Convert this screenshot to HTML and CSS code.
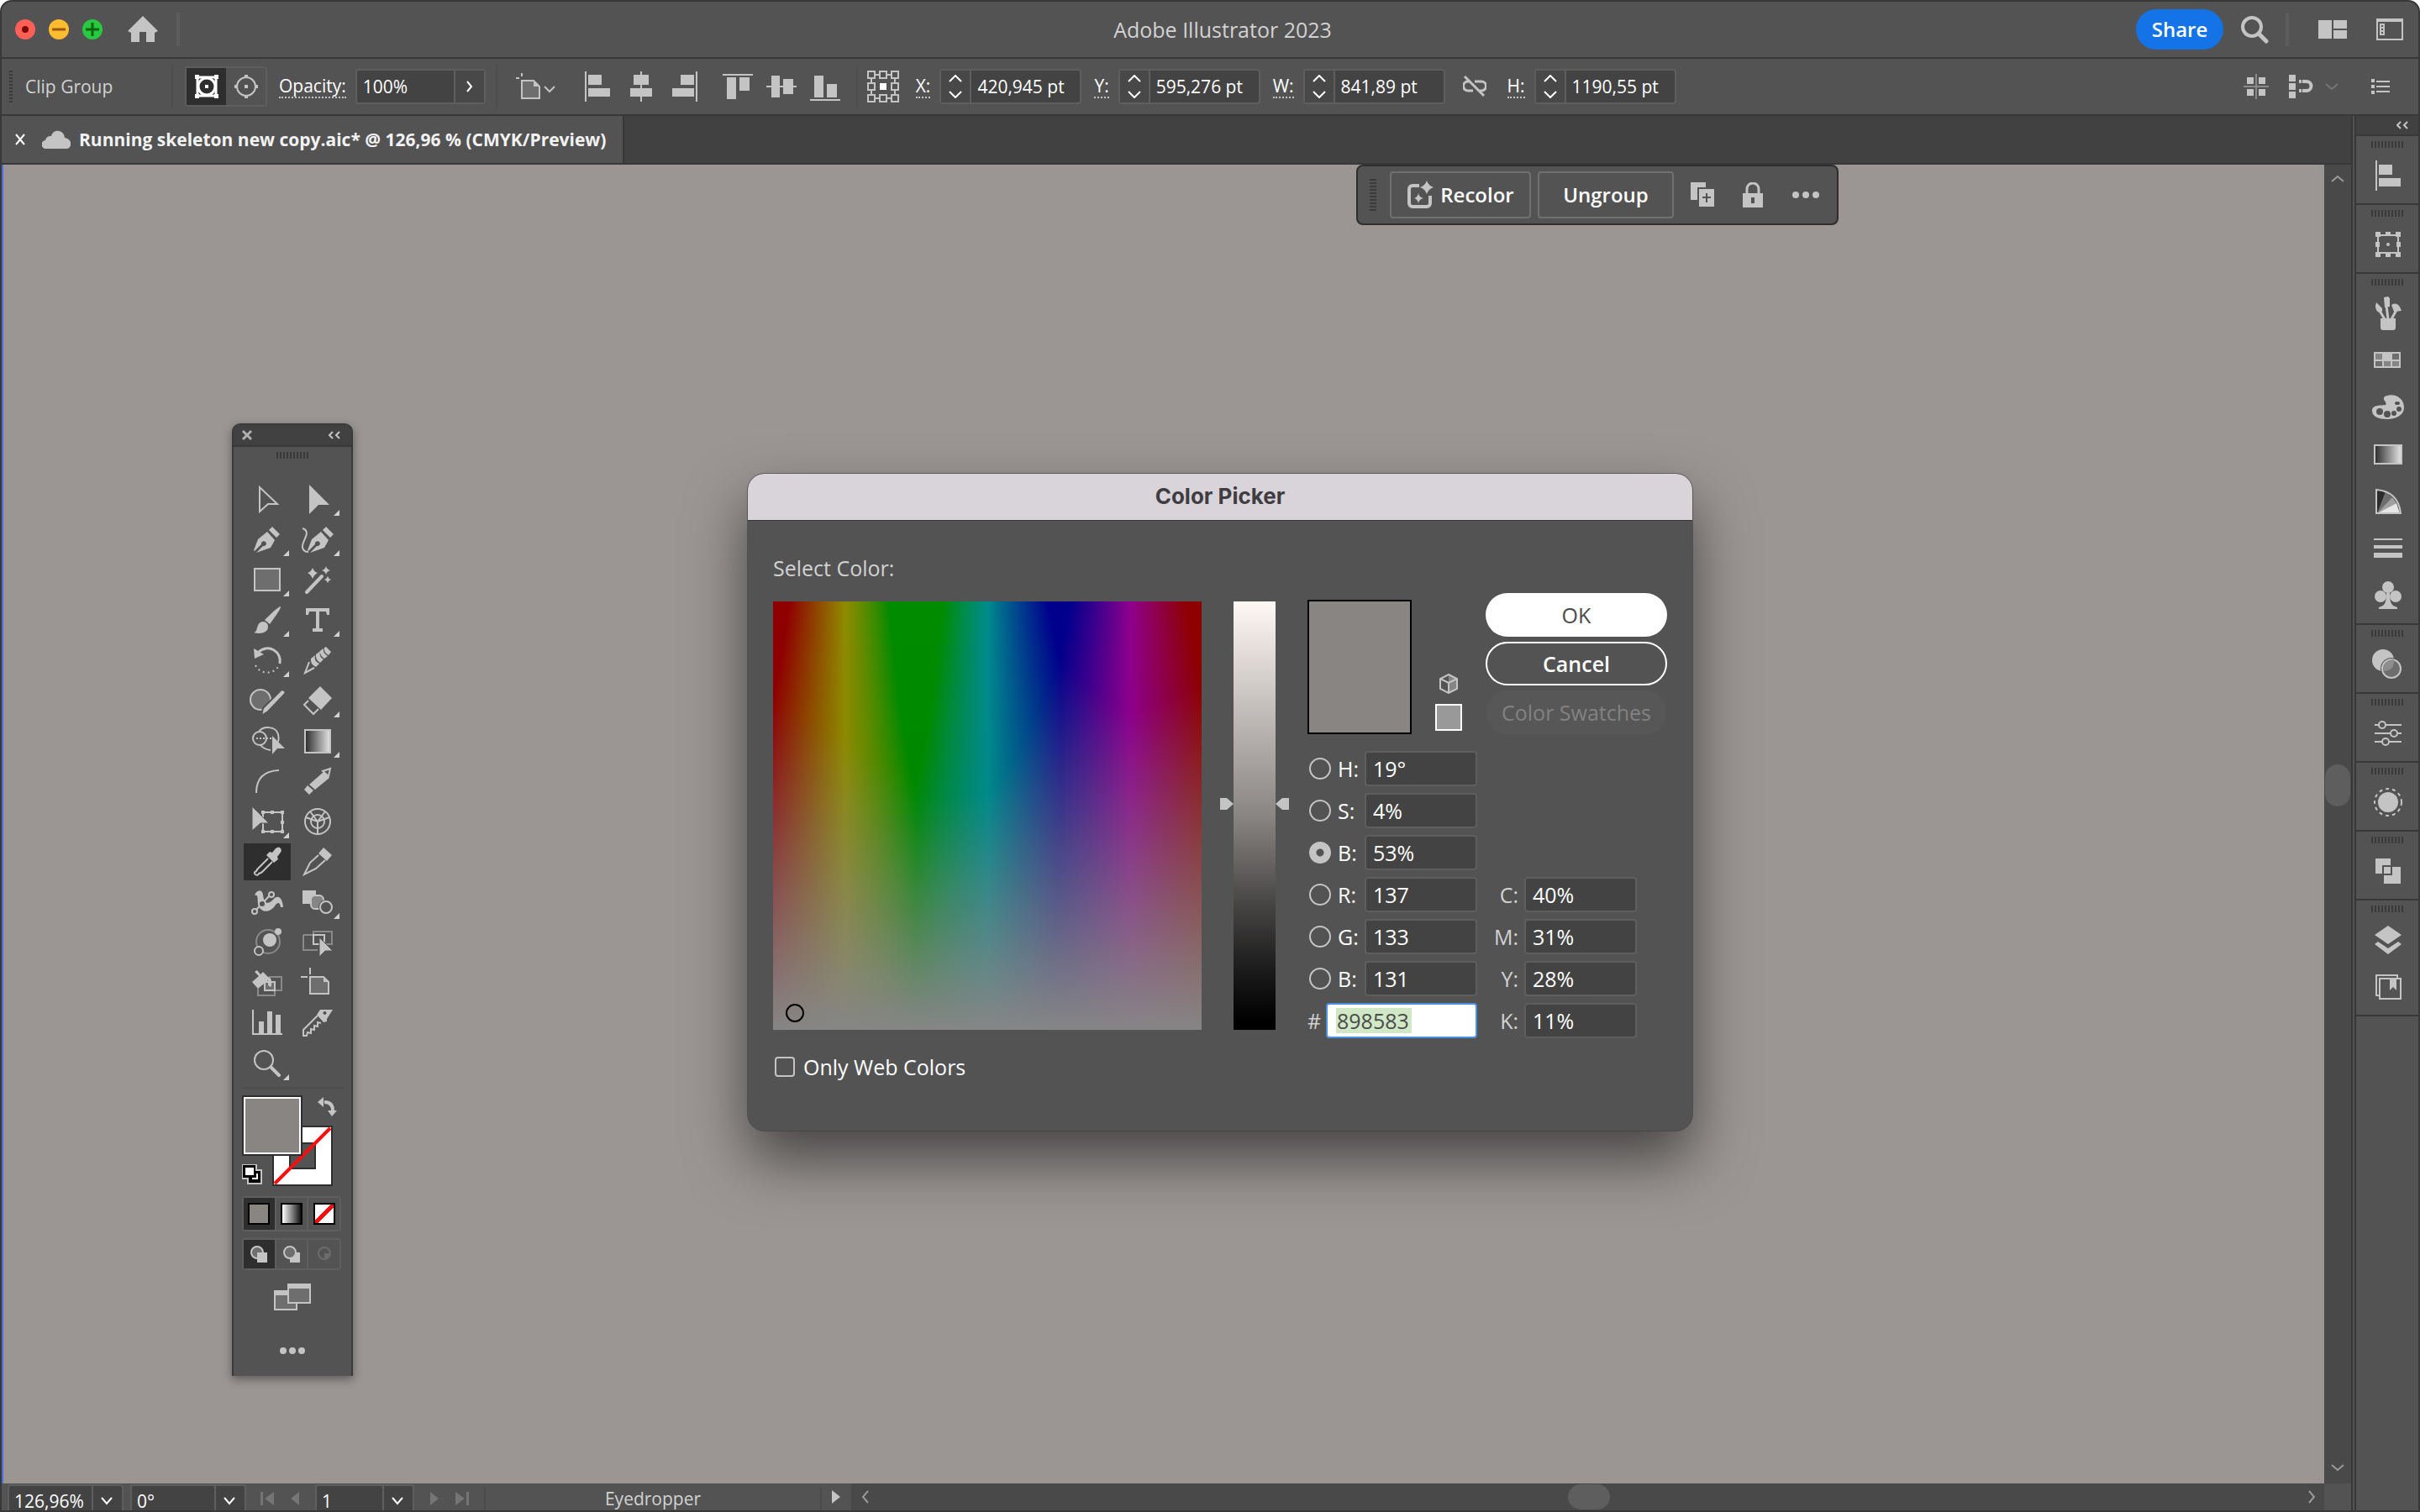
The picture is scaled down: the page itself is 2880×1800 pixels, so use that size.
FILE: index.html
```html
<!DOCTYPE html>
<html lang="en">
<head>
  <meta charset="UTF-8">
  <title>Adobe Illustrator 2023</title>
  <link rel="stylesheet" href="styles.css">
</head>
<body>
<div class="app">

  <!-- Title bar -->
  <header class="titlebar">
    <div class="title-left">
      <svg class="lights" width="104" height="24" viewBox="0 0 104 24">
        <circle cx="12" cy="12" r="12" fill="#ff5f57"/><circle cx="12" cy="12" r="4" fill="#7a0a05"/>
        <circle cx="52" cy="12" r="12" fill="#febc2e"/><path d="M44 12h16" stroke="#985712" stroke-width="3"/>
        <circle cx="92" cy="12" r="12" fill="#28c840"/><path d="M84 12h16M92 4v16" stroke="#0b650d" stroke-width="3"/>
      </svg>
      <svg class="ic" width="36" height="32" viewBox="0 0 36 32"><path d="M18 0L36 18l-4 2v11H22V19h-8v12H4V20l-4-2z"/></svg>
      <span class="bar-sep"></span>
    </div>
    <div class="app-name">Adobe Illustrator 2023</div>
    <div class="title-right">
      <button class="share">Share</button>
      <svg class="ic" width="34" height="34" viewBox="0 0 34 34"><g class="ln"><circle cx="14" cy="14" r="11" stroke-width="4"/><path d="M22 22l9 9" stroke-width="5" stroke-linecap="round"/></g></svg>
      <span class="bar-sep"></span>
      <svg class="ic workspace" width="34" height="22" viewBox="0 0 34 22"><path d="M0 0h16v22H0zM18 0h16v10H18zM18 12h16v10H18z"/></svg>
      <svg class="ic" width="32" height="26" viewBox="0 0 32 26"><path d="M0 0h32v26H0zM2 4v20h28V4z" fill-rule="evenodd"/><path d="M4 6h6v14H4zM6 8v2h2V8zM6 12v2h2v-2zM6 16v2h2v-2z" fill-rule="evenodd"/></svg>
    </div>
  </header>

  <!-- Control bar -->
  <div class="controlbar">
    <span class="grip-v"></span>
    <span class="selection-name">Clip Group</span>
    <span class="sep"></span>
    <div class="toggle">
      <button class="on" aria-label="Edit clipping path"><svg class="ic" width="30" height="30" viewBox="0 0 30 30"><g fill="none" stroke="#fff" stroke-width="3"><rect x="4" y="4" width="22" height="22"/><circle cx="15" cy="15" r="10"/></g><path fill="#fff" d="M1 1h5v5H1zM24 1h5v5h-5zM1 24h5v5H1zM24 24h5v5h-5zM13 13h4v4h-4z"/></svg></button>
      <button aria-label="Edit contents"><svg class="ic" width="28" height="28" viewBox="0 0 28 28"><circle class="ln" cx="14" cy="14" r="11"/><path d="M12 0h4v4h-4zM12 24h4v4h-4zM0 12h4v4H0zM24 12h4v4h-4zM12 12h4v4h-4z"/></svg></button>
    </div>
    <label class="dotted" for="opacity">Opacity:</label>
    <div class="field opacity">
      <input id="opacity" type="text" value="100%">
      <button class="next" aria-label="Opacity slider"><svg width="10" height="14" viewBox="0 0 10 14"><path class="wl" d="M2 1l5 6-5 6"/></svg></button>
    </div>
    <span class="sep"></span>
    <svg class="ic artboard" width="48" height="32" viewBox="0 0 48 32"><path d="M7 9h14l7 7v14H7z" fill="#6e6e6e"/><path class="ln" d="M7 9h14l7 7v14H7zM0 6h4M7 0v4M34 16l6 6 6-6"/><path d="M21 9v7h7z"/></svg>
    <div class="aligns">
      <svg class="ic" width="36" height="36" viewBox="0 0 36 36"><path d="M3 0h2v36H3zM7 4h16v12H7zM7 20h26v10H7z"/></svg>
      <svg class="ic" width="36" height="36" viewBox="0 0 36 36"><path d="M17 0h2v36h-2zM9 4h18v12H9zM5 20h26v10H5z"/></svg>
      <svg class="ic" width="36" height="36" viewBox="0 0 36 36"><path d="M31 0h2v36h-2zM13 4h16v12H13zM3 20h26v10H3z"/></svg>
    </div>
    <div class="aligns">
      <svg class="ic" width="36" height="36" viewBox="0 0 36 36"><path d="M0 3h36v2H0zM5 7h11v26H5zM20 7h12v16H20z"/></svg>
      <svg class="ic" width="36" height="36" viewBox="0 0 36 36"><path d="M0 17h36v2H0zM6 5h10v26H6zM20 9h12v18H20z"/></svg>
      <svg class="ic" width="36" height="36" viewBox="0 0 36 36"><path d="M0 33h36v2H0zM5 5h11v26H5zM20 15h12v16H20z"/></svg>
    </div>
    <span class="sep"></span>
    <svg class="ic refpoint" width="38" height="38" viewBox="0 0 38 38"><g class="ln"><path d="M9 5h6M23 5h6M9 33h6M23 33h6M5 9v6M5 23v6M33 9v6M33 23v6"/><path d="M1 1h8v8H1zM15 1h8v8h-8zM29 1h8v8h-8zM1 15h8v8H1zM29 15h8v8h-8zM1 29h8v8H1zM15 29h8v8h-8zM29 29h8v8h-8z"/></g><path fill="#fff" d="M15 15h8v8h-8z"/></svg>
    <label class="dotted" for="px">X:</label>
    <div class="field"><button aria-label="Step X"><svg width="16" height="28" viewBox="0 0 16 28"><path class="wl" d="M1 8l7-7 7 7M1 20l7 7 7-7"/></svg></button><input id="px" type="text" value="420,945 pt"></div>
    <label class="dotted" for="py">Y:</label>
    <div class="field"><button aria-label="Step Y"><svg width="16" height="28" viewBox="0 0 16 28"><path class="wl" d="M1 8l7-7 7 7M1 20l7 7 7-7"/></svg></button><input id="py" type="text" value="595,276 pt"></div>
    <label class="dotted" for="pw">W:</label>
    <div class="field"><button aria-label="Step W"><svg width="16" height="28" viewBox="0 0 16 28"><path class="wl" d="M1 8l7-7 7 7M1 20l7 7 7-7"/></svg></button><input id="pw" type="text" value="841,89 pt"></div>
    <svg class="ic unlink" width="28" height="26" viewBox="0 0 28 26"><g class="ln" stroke-width="3"><path d="M8 7H6a5 5 0 0 0 0 11h6M14 7h8a5 5 0 0 1 0 11h-2M2 1l23 23"/></g></svg>
    <label class="dotted" for="ph">H:</label>
    <div class="field"><button aria-label="Step H"><svg width="16" height="28" viewBox="0 0 16 28"><path class="wl" d="M1 8l7-7 7 7M1 20l7 7 7-7"/></svg></button><input id="ph" type="text" value="1190,55 pt"></div>
    <div class="control-right">
      <svg class="ic" width="30" height="30" viewBox="0 0 30 30"><path d="M14 0h2v30h-2zM0 14h30v2H0z" fill="#8a8a8a"/><path d="M4 4h8v8H4zM18 4h8v8h-8zM4 18h8v8H4zM18 18h8v8h-8z"/></svg>
      <svg class="ic" width="58" height="30" viewBox="0 0 58 30"><path d="M0 1h8v8H0zM0 11h8v8H0zM0 21h8v8H0zM12 7h3v4h-3zM12 18h3v4h-3z"/><path class="ln" stroke-width="4" d="M16 9h5a5 5 0 0 1 0 11h-5"/><path d="M44 12l7 6 7-6" fill="none" stroke="#777" stroke-width="2"/></svg>
      <svg class="ic list" width="22" height="18" viewBox="0 0 22 18"><path d="M0 0h4v4H0zM0 7h4v4H0zM0 14h4v4H0zM6 2h16v2H6zM6 8h16v2H6zM6 14h16v2H6z"/></svg>
    </div>
  </div>

  <div class="main">
    <div class="document">
      <div class="tabs">
        <div class="tab">
          <button class="tab-close" aria-label="Close"><svg width="14" height="14" viewBox="0 0 14 14"><path class="wl" d="M2 1l10 12M12 1L2 13"/></svg></button>
          <svg class="ic" width="34" height="22" viewBox="0 0 34 22"><path d="M5 22a5 5 0 0 1-1-10 6 6 0 0 1 7-5C13-2 26-1 27 9c6 1 8 5 7 9q-1 4-5 4z"/></svg>
          <span>Running skeleton new copy.aic* @ 126,96 % (CMYK/Preview)</span>
        </div>
      </div>

      <div class="view">
        <div class="canvas">

          <!-- Contextual task bar -->
          <div class="taskbar">
            <span class="grip-v"></span>
            <button class="task"><svg class="ic" width="32" height="34" viewBox="0 0 32 34"><path class="ln" stroke-width="4" d="M15 6H7a4 4 0 0 0-4 4v17a4 4 0 0 0 4 4h17a4 4 0 0 0 4-4v-9"/><path d="M24 0q2 6 8 8-6 2-8 8-2-6-8-8 6-2 8-8zM14 15q1 5 6 6-5 1-6 6-1-5-5-6 4-1 5-6z"/></svg>Recolor</button>
            <button class="task ungroup">Ungroup</button>
            <div class="task-icons">
              <svg class="ic" width="28" height="30" viewBox="0 0 28 30"><path d="M0 0h18v6H8v15H0z"/><path d="M10 8h18v21H10zM18 13v4h-4v2h4v5h2v-5h4v-2h-4v-4z" fill-rule="evenodd"/></svg>
              <svg class="ic" width="24" height="30" viewBox="0 0 24 30"><path d="M0 13h24v17H0zM10 18v7h4v-7z" fill-rule="evenodd"/><path class="ln" stroke-width="3" d="M5 13V8a7 7 0 0 1 14 0v5"/></svg>
              <svg class="ic" width="34" height="10" viewBox="0 0 34 10"><circle cx="5" cy="5" r="4"/><circle cx="17" cy="5" r="4"/><circle cx="29" cy="5" r="4"/></svg>
            </div>
          </div>

          <!-- Tools panel -->
          <aside class="tools">
            <div class="tools-head">
              <svg width="14" height="14" viewBox="0 0 14 14"><path d="M2 2l10 10M12 2L2 12" fill="none" stroke="#b0b0b0" stroke-width="3"/></svg>
              <svg class="ic" width="14" height="10" viewBox="0 0 14 10"><path class="ln" d="M5 1L1 5l4 4M13 1L9 5l4 4"/></svg>
            </div>
            <span class="grip-h"></span>
            <div class="tool-grid">
              <button class="tool" aria-label="Selection"><svg class="ic" viewBox="0 0 60 48"><path class="ln" d="M21 10v29l10-9h11z"/></svg></button>
              <button class="tool more" aria-label="Direct Selection"><svg class="ic" viewBox="0 0 60 48"><path d="M20 7l24 24H31L20 42z"/></svg></button>
              <button class="tool more" aria-label="Pen"><svg class="ic" viewBox="0 0 60 48"><path d="M36 9l9 9-4 4-9-9zM30 15l9 10-5 9-17 6 8-8a3 3 0 1 0-2-2l-8 8-1-1 5-13z"/></svg></button>
              <button class="tool more" aria-label="Curvature"><svg class="ic" viewBox="0 0 60 48"><path d="M40 9l9 9-4 4-9-9zM34 15l9 10-5 9-17 6 8-8a3 3 0 1 0-2-2l-8 8-1-1 5-13z"/><path class="ln" d="M12 11c12 4-2 16 0 23 1 4 4 5 7 5"/></svg></button>
              <button class="tool more" aria-label="Rectangle"><svg class="ic" viewBox="0 0 60 48"><rect class="ln dim" x="15" y="11" width="30" height="26"/></svg></button>
              <button class="tool" aria-label="Magic Wand"><svg class="ic" viewBox="0 0 60 48"><path class="ln" stroke-width="4" stroke-linecap="round" d="M17 39l18-19"/><path d="M24 10q2 5 6 6-4 2-6 7-2-5-6-7 4-1 6-6zM40 8q1 4 5 5-4 1-5 5-1-4-5-5 4-1 5-5zM42 20q1 3 4 4-3 1-4 4-1-3-4-4 3-1 4-4z"/></svg></button>
              <button class="tool more" aria-label="Paintbrush"><svg class="ic" viewBox="0 0 60 48"><path d="M46 8q1 2-13 21l-6-5Q43 8 46 8zM25 26a6 6 0 0 1 6 7c-1 7-10 8-17 6 6-1 2-12 11-13z"/></svg></button>
              <button class="tool more" aria-label="Type"><svg class="ic" viewBox="0 0 60 48"><path d="M16 10h28v8h-3l-1-4h-8v20h4v4H24v-4h4V14h-8l-1 4h-3z"/></svg></button>
              <button class="tool more" aria-label="Rotate"><svg class="ic" viewBox="0 0 60 48"><path class="ln" stroke-width="3" d="M20 14a15 15 0 0 1 25 14"/><path d="M14 10l12 7-11 5z"/><path class="ln" stroke-dasharray="2 4" d="M16 30c5 11 22 12 28 0"/></svg></button>
              <button class="tool" aria-label="Warp"><svg class="ic" viewBox="0 0 60 48"><path d="M40 8l6 6-3 4q-6-3-5-9zM34 12l3-2q-1 6 5 9l-4 3q-6-4-5-9zM28 17l5-4q-2 7 4 10l-4 4q-6-4-5-10zM22 22l5-4q-2 7 5 10l-4 4q-7-3-6-10z"/><path class="ln" d="M20 26l-5 13 11-6"/></svg></button>
              <button class="tool" aria-label="Shaper"><svg class="ic" viewBox="0 0 60 48"><circle class="ln dim" cx="22" cy="23" r="12"/><path stroke="#535353" stroke-width="2" d="M47 11q6 1 4 5L31 37l-8 5 2-9z"/></svg></button>
              <button class="tool more" aria-label="Eraser"><svg class="ic" viewBox="0 0 60 48"><path d="M33 7l14 14-13 14-15-14z"/><path class="ln" d="M19 24l-5 5 11 11 6-6"/></svg></button>
              <button class="tool" aria-label="Shape Builder"><svg class="ic" viewBox="0 0 60 48"><circle class="ln" cx="21" cy="21" r="8"/><path class="ln" d="M20 13c5-7 20-7 23 3 1 4 1 6 0 9M22 29q4 5 12 6"/><path class="ln" stroke-dasharray="2 2" d="M17 21h19"/><path d="M36 18l15 15H42l-6 7z"/></svg></button>
              <button class="tool more" aria-label="Gradient"><svg class="ic" viewBox="0 0 60 48"><defs><linearGradient id="gd"><stop stop-color="#2b2b2b"/><stop offset="1" stop-color="#e6e6e6"/></linearGradient></defs><rect x="15" y="11" width="30" height="27" fill="url(#gd)" stroke="#c4c4c4" stroke-width="2"/></svg></button>
              <button class="tool" aria-label="Arc"><svg class="ic" viewBox="0 0 60 48"><path class="ln" d="M17 38Q17 12 44 11"/></svg></button>
              <button class="tool" aria-label="Pencil"><svg class="ic" viewBox="0 0 60 48"><path d="M37 13l7 7-17 14-7-6zM18 29l7 6-5 5-6-6z"/><path class="ln" d="M36 12l9-3-2 9z"/></svg></button>
              <button class="tool more" aria-label="Free Transform"><svg class="ic" viewBox="0 0 60 48"><path class="ln" d="M25 13h23v23H25z"/><path d="M23 11h4v4h-4zM34 11h4v4h-4zM46 11h4v4h-4zM46 23h4v4h-4zM46 34h4v4h-4zM34 34h4v4h-4zM23 34h4v4h-4z"/><path d="M12 6l20 20H22l-10 9z" stroke="#535353"/></svg></button>
              <button class="tool" aria-label="Polar Grid"><svg class="ic" viewBox="0 0 60 48"><g class="ln"><circle cx="30" cy="24" r="15"/><circle cx="30" cy="24" r="8"/><path d="M30 24v15M30 24l14-5M30 24l-14-5M30 24l9-12M30 24l-9-12"/></g></svg></button>
              <button class="tool active" aria-label="Eyedropper"><svg class="ic" viewBox="0 0 60 48"><path d="M40 8q4-3 6 0 2 3-1 6l-3 4 1 3-5 4-9-9 4-4 3 1z"/><path class="ln" d="M31 20L19 32q-1 1-2 3-4 2-1 4 3 2 4-1 3-1 4-2l12-12"/></svg></button>
              <button class="tool" aria-label="Knife"><svg class="ic" viewBox="0 0 60 48"><path d="M37 7l10 9-6 7-10-9z"/><path class="ln" d="M31 16L21 25l-7 14 14-7 11-10"/></svg></button>
              <button class="tool" aria-label="Puppet Warp"><svg class="ic" viewBox="0 0 60 48"><path d="M15 16c2-7 9-8 10-1 1 10 5 13 12 6 5-6 11-4 12 9h-3c-1-7-4-6-8 0-6 7-15 6-18-1-3-6 1-15-5-13z"/><path class="ln" d="M17 33l16-17"/><g fill="#535353" stroke="#c4c4c4" stroke-width="2"><circle cx="15" cy="35" r="3"/><circle cx="24" cy="26" r="4"/><circle cx="35" cy="15" r="3"/></g></svg></button>
              <button class="tool more" aria-label="Blend"><svg class="ic" viewBox="0 0 60 48"><path d="M12 10h16v16H12z"/><rect x="22" y="16" width="15" height="16" rx="5" fill="#858585" stroke="#c4c4c4" stroke-width="2"/><circle cx="40" cy="30" r="9" fill="#535353"/><circle class="ln" cx="40" cy="30" r="7"/></svg></button>
              <button class="tool" aria-label="Symbols"><svg class="ic" viewBox="0 0 60 48"><circle cx="31" cy="23" r="14" fill="none" stroke="#8a8a8a" stroke-width="2"/><circle cx="33" cy="21" r="8"/><circle cx="43" cy="11" r="4"/><circle cx="20" cy="34" r="5" fill="#535353" stroke="#c4c4c4" stroke-width="2"/></svg></button>
              <button class="tool" aria-label="Group Selection"><svg class="ic" viewBox="0 0 60 48"><path fill="none" stroke="#8a8a8a" stroke-width="2" d="M13 15h17M13 15v18h17M25 15v-4h22v15h-9"/><path class="ln" d="M25 15h13v11H25z"/><path d="M32 18l16 16h-9l-7 7z" stroke="#535353"/></svg></button>
              <button class="tool" aria-label="Live Paint"><svg class="ic" viewBox="0 0 60 48"><path fill="none" stroke="#8a8a8a" stroke-width="2" d="M32 17h15v16H35M19 31v8h20v-8"/><path class="ln dim" d="M27 23h12v10H27z"/><path d="M15 11l3-2 4 5 3-3 6 6q5 0 4 11-3 2-4-2v-5L19 31l-7-8 8-7z"/></svg></button>
              <button class="tool" aria-label="Artboard"><svg class="ic" viewBox="0 0 60 48"><path class="ln dim" d="M21 17h16l6 6v14H21z"/><path d="M37 17v6h6zM20 6h2v8h-2zM10 16h8v2h-8z"/></svg></button>
              <button class="tool" aria-label="Column Graph"><svg class="ic" viewBox="0 0 60 48"><path d="M12 8h2v28h34v2H12zM20 22h6v14h-6zM30 10h6v26h-6zM40 14h6v22h-6z"/></svg></button>
              <button class="tool" aria-label="Slice"><svg class="ic" viewBox="0 0 60 48"><path d="M33 8h15l-7 11v3l-4 1-8-9zM38 10a2 2 0 1 0 1 0z" fill-rule="evenodd"/><path class="ln" d="M30 15L13 32v7h4l1-4 4 1 0-5 4 1 0-5 4 1 0-5 4 1"/></svg></button>
              <button class="tool more" aria-label="Zoom"><svg class="ic" viewBox="0 0 60 48"><circle class="ln" cx="26" cy="20" r="11"/><path class="ln" stroke-width="4" stroke-linecap="round" d="M35 29l9 9"/></svg></button>
            </div>
            <hr>
            <svg class="fillstroke" width="118" height="112" viewBox="0 0 118 112">
              <path d="M36 38h72v72H36z" fill="#2e2e2e"/><path d="M38 40h68v68H38z" fill="#fff"/>
              <path d="M56 58h32v32H56z" fill="#2e2e2e"/><path d="M58 60h28v28H58z" fill="#535353"/>
              <path d="M39 107l66-66" stroke="#f70d0d" stroke-width="4"/>
              <path d="M0 2h72v72H0z" fill="#2e2e2e"/><path d="M2 4h68v68H2z" fill="#fff"/><path d="M4 6h64v64H4z" fill="#898583"/>
              <path d="M98 10q10 0 10 10" fill="none" stroke="#c4c4c4" stroke-width="4"/><path d="M90 10l7-6v12zM102 20h11l-6 7z" fill="#c4c4c4"/>
              <path d="M0 84h18v6h6v18H6v-6H0z" fill="#c4c4c4"/><path d="M8 92h14v14H8z"/><path d="M1 85h15v15H1z"/><path d="M4 88h10v9H4z" fill="#fff"/><path d="M12 101h6v-6" fill="none" stroke="#fff" stroke-width="2"/>
            </svg>
            <div class="modes">
              <button class="on" aria-label="Color"><span class="chip flat"></span></button>
              <button aria-label="Gradient"><span class="chip grad"></span></button>
              <button aria-label="None"><span class="chip none"></span></button>
            </div>
            <div class="modes draw">
              <button class="on" aria-label="Draw Normal"><svg class="ic" width="22" height="22" viewBox="0 0 22 22"><circle class="ln dim" cx="9" cy="9" r="7"/><path d="M9 9h12v12H9z"/></svg></button>
              <button aria-label="Draw Behind"><svg class="ic" width="22" height="22" viewBox="0 0 22 22"><path d="M9 9h12v12H9z"/><circle class="ln dim" cx="9" cy="9" r="7"/></svg></button>
              <button disabled aria-label="Draw Inside"><svg width="22" height="22" viewBox="0 0 22 22"><circle cx="11" cy="10" r="7" fill="none" stroke="#6c6c6c" stroke-width="2"/><path d="M11 10h7l-3 6-4 1z" fill="#6c6c6c"/></svg></button>
            </div>
            <svg class="ic screens" width="44" height="32" viewBox="0 0 44 32"><path d="M0 8h28v24H0z"/><path d="M2 14h24v16H2z" fill="#6e6e6e"/><path d="M16 0h28v24H16z"/><path d="M18 6h24v16H18z" fill="#6e6e6e"/></svg>
            <svg class="ic dots" width="30" height="8" viewBox="0 0 30 8"><circle cx="4" cy="4" r="4"/><circle cx="15" cy="4" r="4"/><circle cx="26" cy="4" r="4"/></svg>
          </aside>

          <!-- Color picker -->
          <section class="picker">
            <h2>Color Picker</h2>
            <div class="picker-body">
              <div class="picker-left">
                <p>Select Color:</p>
                <div class="spectra">
                  <div class="plane">
                    <canvas id="plane" width="510" height="510"></canvas>
                    <span class="marker"></span>
                  </div>
                  <div class="ramp"><svg class="ic handles" width="82" height="14" viewBox="0 0 82 14"><path d="M0 0h8l8 7-8 7H0zM82 0h-8l-8 7 8 7h8z"/></svg></div>
                </div>
                <label class="web"><input type="checkbox">Only Web Colors</label>
              </div>
              <div class="picker-right">
                <div class="top">
                  <div class="preview"></div>
                  <div class="webcolor">
                    <svg class="ic" width="22" height="24" viewBox="0 0 22 24"><path d="M11 1l10 5v12l-10 5z" fill="#858585"/><path class="ln" d="M11 1l10 5v12l-10 5-10-5V6zM1 6l10 5 10-5M11 11v12"/></svg>
                    <span></span>
                  </div>
                  <div class="buttons">
                    <button class="ok">OK</button>
                    <button class="cancel">Cancel</button>
                    <button class="swatches" disabled>Color Swatches</button>
                  </div>
                </div>
                <div class="values">
                  <div class="col">
                    <div class="row"><input type="radio" name="ch" id="rh"><label for="rh">H:</label><input type="text" value="19°" aria-label="Hue"></div>
                    <div class="row"><input type="radio" name="ch" id="rs"><label for="rs">S:</label><input type="text" value="4%" aria-label="Saturation"></div>
                    <div class="row"><input type="radio" name="ch" id="rv" checked><label for="rv">B:</label><input type="text" value="53%" aria-label="Brightness"></div>
                    <div class="row"><input type="radio" name="ch" id="rr"><label for="rr">R:</label><input type="text" value="137" aria-label="Red"></div>
                    <div class="row"><input type="radio" name="ch" id="rg"><label for="rg">G:</label><input type="text" value="133" aria-label="Green"></div>
                    <div class="row"><input type="radio" name="ch" id="rb"><label for="rb">B:</label><input type="text" value="131" aria-label="Blue"></div>
                    <div class="row"><label class="hash" for="hex">#</label><input class="hex" id="hex" type="text" value="898583"></div>
                  </div>
                  <div class="col cmyk">
                    <div class="row"><label for="cc">C:</label><input id="cc" type="text" value="40%"></div>
                    <div class="row"><label for="cm">M:</label><input id="cm" type="text" value="31%"></div>
                    <div class="row"><label for="cy">Y:</label><input id="cy" type="text" value="28%"></div>
                    <div class="row"><label for="ck">K:</label><input id="ck" type="text" value="11%"></div>
                  </div>
                </div>
              </div>
            </div>
          </section>
        </div>

        <div class="vscroll">
          <svg width="16" height="10" viewBox="0 0 16 10"><path d="M1 8l7-6 7 6"/></svg>
          <span></span>
          <svg width="16" height="10" viewBox="0 0 16 10"><path d="M1 2l7 6 7-6"/></svg>
        </div>
      </div>

      <!-- Status bar -->
      <footer class="status">
        <div class="drop"><select aria-label="Zoom level"><option>126,96%</option></select><svg width="14" height="10" viewBox="0 0 14 10"><path class="wl" d="M1 1l6 7 6-7"/></svg></div>
        <div class="drop"><select aria-label="Rotate view"><option>0°</option></select><svg width="14" height="10" viewBox="0 0 14 10"><path class="wl" d="M1 1l6 7 6-7"/></svg></div>
        <svg class="nav" width="46" height="16" viewBox="0 0 46 16"><path d="M0 0h3v16H0zM16 0v16L5 8zM46 0v16L36 8z"/></svg>
        <div class="drop page"><select aria-label="Artboard"><option>1</option></select><svg width="14" height="10" viewBox="0 0 14 10"><path class="wl" d="M1 1l6 7 6-7"/></svg></div>
        <svg class="nav" width="46" height="16" viewBox="0 0 46 16"><path d="M0 0v16l10-8zM30 0v16l11-8zM43 0h3v16h-3z"/></svg>
        <div class="tool-name">Eyedropper</div>
        <svg class="ic" width="10" height="16" viewBox="0 0 10 16"><path d="M0 0v16l10-8z"/></svg>
        <div class="hscroll">
          <svg width="10" height="16" viewBox="0 0 10 16"><path d="M8 1L2 8l6 7"/></svg>
          <span></span>
          <svg width="10" height="16" viewBox="0 0 10 16"><path d="M2 1l6 7-6 7"/></svg>
        </div>
      </footer>
    </div>

    <!-- Panel dock -->
    <aside class="dock">
      <div class="dock-head"><svg class="ic" width="14" height="10" viewBox="0 0 14 10"><path class="ln" d="M5 1L1 5l4 4M13 1L9 5l4 4"/></svg></div>
      <div class="dock-group">
        <span class="grip-h"></span>
        <svg class="ic" viewBox="0 0 40 56"><path d="M5 10h2v36H5zM9 15h16v12H9zM9 31h26v10H9z"/></svg>
      </div>
      <div class="dock-group">
        <span class="grip-h"></span>
        <svg class="ic" viewBox="0 0 40 56"><path class="ln" d="M8 17h24v21H8z"/><path d="M5 13h6v6H5zM17 13h6v5h-6zM29 13h6v6h-6zM5 25h5v6H5zM30 25h5v6h-5zM5 37h6v6H5zM17 38h6v5h-6zM29 37h6v6h-6z"/><circle cx="20" cy="28" r="2"/></svg>
      </div>
      <div class="dock-group">
        <span class="grip-h"></span>
        <svg class="ic" viewBox="0 0 40 56"><path d="M11 34h18v11q0 3-3 3H14q-3 0-3-3z"/><path class="ln" stroke-width="3" d="M16 35l-6-10M20 35l-2-16M24 35l6-11"/><path d="M6 15l7 7q1 6-4 5-6-4-3-12zM15 9l5-1 2 2v10l-6 1zM24 18q8-5 12 7l-9 1z"/></svg>
        <svg class="ic" viewBox="0 0 40 56"><path d="M3 18h32v19H3z"/><path d="M5 20h8v7H5zM15 29h8v6h-8zM25 29h8v6h-8z" fill="#858585"/><path d="M25 20h8v7h-8zM5 29h8v6H5z" fill="#6e6e6e"/></svg>
        <svg class="ic" viewBox="0 0 40 56"><path d="M16 15c12-5 23 2 23 13 0 10-11 14-20 14-10 0-18-3-18-10 0-8 12-6 16-7 3-3-5-6-1-10z"/><g fill="#535353"><circle cx="10" cy="33" r="4"/><circle cx="19" cy="36" r="4"/><circle cx="27" cy="35" r="3"/><circle cx="33" cy="30" r="3"/><ellipse cx="31" cy="23" rx="3" ry="2"/></g></svg>
        <svg class="ic" viewBox="0 0 40 56"><rect x="4" y="17" width="32" height="22" fill="url(#gd)" stroke="#c4c4c4" stroke-width="2"/></svg>
        <svg class="ic" viewBox="0 0 40 56"><path d="M7 42V14q9 0 16 7z" fill="#2b2b2b"/><path d="M7 42L17 16l8 7z" fill="#6e6e6e"/><path d="M7 42l18-19 5 7z" fill="#a0a0a0"/><path d="M7 42l23-12 4 12z" fill="#e6e6e6"/><path class="ln" d="M6 14q26 2 29 28H6z"/></svg>
        <svg class="ic" viewBox="0 0 40 56"><path d="M3 16h34v2H3zM3 24h34v4H3zM3 33h34v6H3z"/></svg>
        <svg class="ic" viewBox="0 0 40 56"><circle cx="20" cy="18" r="7"/><circle cx="11" cy="29" r="7"/><circle cx="29" cy="29" r="7"/><path d="M18 25h4c0 10 1 15 9 17v2H9v-2c8-2 9-7 9-17z"/></svg>
      </div>
      <div class="dock-group">
        <span class="grip-h"></span>
        <svg class="ic" viewBox="0 0 40 56"><circle cx="14" cy="23" r="13"/><circle cx="24" cy="33" r="13" fill="#535353"/><circle cx="24" cy="33" r="11" fill="#6e6e6e" stroke="#c4c4c4" stroke-width="2"/><path d="M27 22c1 9-4 14-13 14 0-8 5-14 13-14z" fill="#8e8e8e"/></svg>
      </div>
      <div class="dock-group">
        <span class="grip-h"></span>
        <svg class="ic" viewBox="0 0 40 56"><path class="ln" d="M4 18h32M4 28h32M4 38h32"/><g fill="#535353" stroke="#c4c4c4" stroke-width="2"><circle cx="13" cy="18" r="4"/><circle cx="27" cy="28" r="4"/><circle cx="17" cy="38" r="4"/></g></svg>
      </div>
      <div class="dock-group">
        <span class="grip-h"></span>
        <svg class="ic" viewBox="0 0 40 56"><circle cx="20" cy="28" r="12"/><circle class="ln" cx="20" cy="28" r="16" stroke-dasharray="4 4"/></svg>
      </div>
      <div class="dock-group">
        <span class="grip-h"></span>
        <svg class="ic" viewBox="0 0 40 56"><path d="M5 13h18v8h-10v10H5zM25 23h10v20H15V33h10z"/><path d="M15 23h8v8h-8z"/></svg>
      </div>
      <div class="dock-group">
        <span class="grip-h"></span>
        <svg class="ic" viewBox="0 0 40 56"><path d="M20 11l16 11-16 11L4 22zM8 30l12 8 12-8 4 3-16 12L4 33z"/></svg>
        <svg class="ic" viewBox="0 0 40 56"><path class="ln" d="M9 38H6V14h25v4M10 18h25v24H10z"/><path d="M22 19h8v13l-4-4-4 4z"/></svg>
      </div>
    </aside>
  </div>
</div>
<script src="script.js"></script>
</body>
</html>
```

FILE: styles.css
```css
* { box-sizing: border-box; }
body {
  margin: 0;
  background: #fff;
  color: #fff;
  font: 500 21px/28px "Open Sans", "Noto Sans", sans-serif;
}
button, input, select { font: inherit; color: inherit; margin: 0; padding: 0; border: 0; background: none; }
input { min-width: 0; }
svg { display: block; flex: none; }

.ic { fill: #c4c4c4; }
.ln { fill: none; stroke: #c4c4c4; stroke-width: 2; }
.ln[stroke-width="3"] { stroke-width: 3; }
.ln[stroke-width="4"] { stroke-width: 4; }
.ln circle[stroke-width] { stroke-width: 4; }
.ln path[stroke-width] { stroke-width: 5; }
.ln.dim { fill: #6e6e6e; }
.wl { fill: none; stroke: #fff; stroke-width: 2; }

.app {
  height: 100vh;
  display: flex;
  flex-direction: column;
  background: #535353;
  border: 2px solid #383838;
  border-radius: 14px 14px 0 0;
  overflow: hidden;
}

/* title bar */
.titlebar {
  display: grid;
  grid-template-columns: 1fr auto 1fr;
  align-items: center;
  height: 68px;
  border-bottom: 2px solid #383838;
}
.title-left { display: flex; align-items: center; gap: 22px; padding-left: 16px; }
.title-left .lights { margin-right: 8px; }
.bar-sep { width: 4px; height: 40px; background: #5c5c5c; }
.app-name { padding-left: 30px; color: #d2d2d2; font-size: 25px; line-height: 34px; }
.title-right { display: flex; align-items: center; justify-content: flex-end; gap: 20px; padding-right: 18px; }
.title-right .workspace { margin: 0 15px; }
.share { width: 104px; height: 48px; border-radius: 24px; background: #1473e6; font-size: 24px; font-weight: 600; }

/* control bar */
.controlbar {
  display: flex;
  align-items: center;
  height: 68px;
  padding-left: 9px;
  border-bottom: 2px solid #383838;
}
.grip-v { width: 4px; height: 38px; background: repeating-linear-gradient(#3a3a3a 0 2px, transparent 2px 4px); }
.grip-h { display: block; width: 38px; height: 8px; background: repeating-linear-gradient(90deg, #3a3a3a 0 2px, transparent 2px 4px); }
.sep { width: 2px; height: 52px; background: #4d4d4d; }
.selection-name { width: 189px; padding-left: 15px; color: #d2d2d2; }
.toggle { display: flex; margin: 0 14px; border: 2px solid #5e5e5e; border-radius: 4px; }
.toggle button { width: 47px; height: 44px; display: grid; place-items: center; }
.toggle .on { background: #2e2e2e; }
.dotted { line-height: 26px; border-bottom: 2px dotted #c4c4c4; }
.field {
  display: flex;
  width: 169px;
  height: 42px;
  margin: 0 15px 0 11px;
  background: #434343;
  border: 2px solid #5e5e5e;
  border-radius: 4px;
}
.field button { width: 36px; display: grid; place-items: center; border-right: 2px solid #5e5e5e; background: #484848; }
.field input { flex: 1; padding-left: 7px; }
.field .next { border-right: 0; border-left: 2px solid #5e5e5e; }
.opacity { width: 155px; margin-right: 12px; }
.artboard { margin: 0 31px 0 22px; }
.aligns { display: flex; gap: 16px; margin-right: 27px; }
.aligns + .aligns { margin-right: 19px; }
.refpoint { margin: 0 20px 0 11px; }
.unlink { margin: 0 25px 0 6px; }
.control-right { flex: 1; display: flex; align-items: center; justify-content: flex-end; gap: 24px; padding-right: 34px; }
.control-right .list { margin-left: 16px; }

/* document */
.main { flex: 1; display: flex; min-height: 0; }
.document { flex: 1; display: flex; flex-direction: column; min-width: 0; border-right: 2px solid #383838; }
.tabs { display: flex; height: 58px; background: #414141; border-bottom: 2px solid #383838; }
.tab {
  display: flex;
  align-items: center;
  padding: 0 20px 0 15px;
  background: #535353;
  border-right: 2px solid #383838;
  color: #f2f2f2;
  font-weight: 700;
}
.tab .ic { margin: 0 10px 0 19px; }
.view { flex: 1; display: flex; min-height: 0; }
.canvas { position: relative; flex: 1; background: #9b9694; border-left: 2px solid #4a70e0; }
.vscroll { display: flex; flex-direction: column; align-items: center; justify-content: space-between; width: 32px; padding: 12px 0 14px; background: #494949; }
.vscroll span { width: 30px; height: 50px; margin-top: -90px; border-radius: 15px; background: #5e5e5e; }
.vscroll path, .hscroll path { fill: none; stroke: #9a9a9a; stroke-width: 2; }

/* contextual task bar */
.taskbar {
  position: absolute;
  left: 1610px;
  top: 0;
  display: flex;
  align-items: center;
  gap: 8px;
  height: 72px;
  padding: 0 20px 0 14px;
  background: #535353;
  border: 2px solid #2e2e2e;
  border-radius: 8px;
}
.taskbar .grip-v { width: 8px; margin-right: 8px; }
.task {
  display: flex;
  align-items: center;
  justify-content: center;
  gap: 8px;
  width: 168px;
  height: 56px;
  border: 2px solid #707070;
  border-radius: 4px;
  font-size: 24px;
  font-weight: 600;
}
.task.ungroup { width: 162px; }
.task-icons { display: flex; align-items: center; gap: 34px; padding-left: 12px; }

/* tools */
.tools {
  position: absolute;
  left: 272px;
  top: 308px;
  width: 144px;
  padding-bottom: 26px;
  background: #535353;
  border: 2px solid #3a3a3a;
  border-bottom: 0;
  border-radius: 10px 10px 0 0;
  box-shadow: 0 4px 12px rgba(0, 0, 0, .4);
}
.tools-head {
  display: flex;
  align-items: center;
  justify-content: space-between;
  height: 26px;
  padding: 0 13px 0 9px;
  background: #414141;
  border-bottom: 2px solid #3a3a3a;
  border-radius: 8px 8px 0 0;
}
.tools .grip-h { margin: 6px auto 24px; }
.tool-grid { display: grid; grid-template-columns: 60px 60px; margin-left: 10px; }
.tool { position: relative; width: 60px; height: 48px; }
.tool svg { width: 60px; height: 48px; }
.tool.active { background: linear-gradient(#2e2e2e, #2e2e2e) center / 56px 44px no-repeat; }
.tool.more::after {
  content: "";
  position: absolute;
  left: 49px;
  top: 37px;
  width: 7px;
  height: 7px;
  background: #d2d2d2;
  clip-path: polygon(100% 0, 100% 100%, 0 100%);
}
.tools hr { height: 2px; margin: 4px 10px 6px; border: 0; background: #4d4d4d; }
.fillstroke { margin-left: 10px; }
.modes { display: flex; width: 118px; height: 42px; margin: 10px 0 8px 10px; border: 2px solid #5e5e5e; border-radius: 4px; }
.modes button { flex: 1; display: grid; place-items: center; }
.modes button + button { border-left: 2px solid #5e5e5e; }
.modes .on { background: #2e2e2e; }
.modes.draw { height: 38px; margin-top: 0; }
.chip { width: 26px; height: 26px; border: 2px solid #000; }
.flat { background: #898583; }
.grad { background: linear-gradient(90deg, #fff, #111); }
.none { background: linear-gradient(135deg, #fff 42%, #f70d0d 42% 58%, #fff 58%); }
.screens { margin: 16px auto 44px 48px; }
.dots { margin: 0 auto; }

/* color picker */
.picker {
  position: absolute;
  left: 886px;
  top: 368px;
  width: 1124px;
  background: #535353;
  border-radius: 20px;
  box-shadow: 0 0 0 1px rgba(60, 60, 60, .6), 0 34px 70px rgba(0, 0, 0, .55);
  font-size: 25px;
  overflow: hidden;
}
.picker h2 {
  margin: 0;
  height: 56px;
  background: #d9d4d9;
  border-bottom: 1px solid #3a3a3a;
  color: #3f3d42;
  font: 700 26px/54px Inter, sans-serif;
  text-align: center;
}
.picker-body { display: flex; gap: 38px; padding: 40px 30px 60px 30px; }
.picker p { margin: 0 0 24px; line-height: 32px; color: #d2d2d2; }
.spectra { display: flex; gap: 38px; }
.plane { position: relative; }
.plane canvas { display: block; }
.marker { position: absolute; left: 15px; top: 479px; width: 22px; height: 22px; border: 2px solid #000; border-radius: 50%; }
.ramp { position: relative; width: 50px; background: linear-gradient(#fff8f4, #898583 50%, #464443 71%, #1b1b1b 86%, #000 98%); }
.handles { position: absolute; left: -16px; top: 234px; }
.web { display: flex; align-items: center; gap: 10px; margin-top: 28px; padding-left: 2px; line-height: 32px; }
.web input { appearance: none; width: 24px; height: 24px; border: 2px solid #c4c4c4; border-radius: 4px; }
.picker-right { flex: 1; min-width: 0; padding-top: 46px; }
.top { display: flex; align-items: flex-end; }
.preview { width: 124px; height: 160px; background: #898583; border: 2px solid #000; }
.webcolor { display: grid; justify-items: center; gap: 12px; margin: 0 28px 4px; }
.webcolor span { width: 32px; height: 32px; background: #999; border: 2px solid #fff; }
.buttons { display: grid; gap: 6px; flex: 1; }
.buttons button { height: 52px; border-radius: 26px; }
.buttons .ok { background: #fff; color: #4b4b4b; }
.buttons .cancel { border: 2px solid #fff; font-weight: 600; }
.buttons .swatches { background: #575757; color: #828282; }
.values { display: flex; align-items: flex-end; gap: 20px; margin-top: 20px; }
.col { display: grid; grid-template-columns: minmax(0, 1fr); gap: 8px; width: 202px; }
.row { display: flex; align-items: center; height: 42px; }
.row input[type=radio] { appearance: none; flex: none; width: 26px; height: 26px; margin: 0 8px 0 2px; border: 2px solid #c4c4c4; border-radius: 50%; }
.row input[type=radio]:checked { background: radial-gradient(#535353 0 4px, #c4c4c4 5px); }
.row label { flex: none; width: 32px; }
.row input[type=text] { flex: 1; height: 42px; padding-left: 8px; background: #434343; border: 2px solid #5e5e5e; border-radius: 4px; }
.row .hash { width: 22px; color: #d2d2d2; }
.row .hex[type=text] {
  padding-left: 11px;
  border-color: #4a90e2;
  background: linear-gradient(#d0e8c5, #d0e8c5) 10px center / 90px 30px no-repeat #fff;
  color: #4b4b4b;
}
.cmyk { width: 170px; }
.cmyk .row label { width: 36px; padding-right: 7px; color: #d2d2d2; direction: ltr; display: flex; justify-content: flex-end; }

/* status bar */
.status { display: flex; align-items: center; height: 32px; padding-left: 7px; overflow: hidden; }
.drop { position: relative; width: 138px; height: 36px; margin: 6px 8px 0 0; background: #434343; border: 2px solid #5e5e5e; border-radius: 4px; }
.drop select { appearance: none; width: 100%; height: 36px; padding-left: 6px; }
.drop svg { position: absolute; right: 11px; top: 13px; }
.drop::after { content: ""; position: absolute; right: 34px; top: 0; width: 2px; height: 100%; background: #5e5e5e; }
.page { width: 118px; margin: 6px 19px 0; }
.nav { margin-top: 4px; fill: #757575; }
.drop + .nav { margin-left: 9px; }
.page + .nav { margin-left: 0; }
.tool-name { width: 402px; margin: 4px 12px 0 18px; border: solid #4a4a4a; border-width: 0 2px; color: #d2d2d2; text-align: center; }
.hscroll { flex: 1; display: flex; align-items: center; justify-content: space-between; height: 32px; margin: 0 32px 0 13px; padding: 0 10px 0 12px; background: #494949; }
.hscroll span { width: 50px; height: 30px; border-radius: 15px; background: #5e5e5e; }

/* dock */
.dock { width: 76px; margin-left: 2px; border-left: 2px solid #383838; }
.dock-head { display: flex; align-items: center; justify-content: flex-end; height: 24px; padding-right: 12px; background: #414141; border-bottom: 2px solid #383838; }
.dock-group { padding: 6px 0 5px 18px; border-bottom: 2px solid #383838; }
.dock-group .grip-h { margin-bottom: 5px; }
.dock-group .ic { width: 40px; height: 56px; }
```

FILE: script.js
```js
// hue runs left to right, saturation bottom to top, brightness is fixed at 53%
const plane = document.getElementById('plane');
const ctx = plane.getContext('2d');
const w = plane.width;
const h = plane.height;
const img = ctx.createImageData(w, h);
const level = [143, 139, 141];

// saturation boost per channel at red, yellow, green, cyan, blue, magenta, red
const boost = [
  [1.2, 1.2, 1.85, 1.8, 1.15, 1.3, 1.2],
  [1.28, 1.3, 1.3, 1.3, 1.15, 1.35, 1.25],
  [1.28, 1.45, 1.75, 1.3, 1.2, 1.3, 1.25]
];

for (let y = 0; y < h; y++) {
  const sat = 1 - y / h;
  for (let x = 0; x < w; x++) {
    const hue = x / w * 6;
    const i = Math.floor(hue);
    const f = hue - i;
    const full = [
      Math.abs(hue - 3) - 1,
      2 - Math.abs(hue - 2),
      2 - Math.abs(hue - 4)
    ];
    for (let c = 0; c < 3; c++) {
      const v = Math.min(1, Math.max(0, full[c]));
      const k = boost[c][i] * (1 - f) + boost[c][i + 1] * f;
      const top = 134 + (level[c] - 134) * sat;
      img.data[(y * w + x) * 4 + c] = top * Math.max(0, 1 - k * sat * (1 - v));
    }
    img.data[(y * w + x) * 4 + 3] = 255;
  }
}
ctx.putImageData(img, 0, 0);
```
